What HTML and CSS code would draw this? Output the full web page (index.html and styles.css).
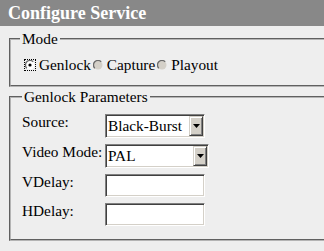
FILE: index.html
```html
<!DOCTYPE html>
<html>
<head>
<meta charset="utf-8">
<title>Configure Service</title>
<link rel="stylesheet" href="styles.css">
</head>
<body class="page">
<div class="header">Configure Service</div>
<fieldset class="group mode">
  <legend class="legend">Mode</legend>
  <div class="radios">
    <label class="opt"><span class="radio focus"><svg width="10" height="10" viewBox="0 0 10 10"><circle cx="5" cy="5" r="4.5" fill="#fff"/><path d="M8.2 1.8A4.5 4.5 0 0 0 1.8 8.2" fill="none" stroke="#6a6a6a" stroke-width="1.3"/><circle cx="5" cy="5" r="1.6" fill="#000"/></svg></span>Genlock</label>
    <label class="opt"><span class="radio"><svg width="10" height="10" viewBox="0 0 10 10"><circle cx="5" cy="5" r="4.5" fill="#d4d0c8"/><path d="M8.2 1.8A4.5 4.5 0 0 0 1.8 8.2" fill="none" stroke="#6a6a6a" stroke-width="1.3"/></svg></span>Capture</label>
    <label class="opt"><span class="radio"><svg width="10" height="10" viewBox="0 0 10 10"><circle cx="5" cy="5" r="4.5" fill="#d4d0c8"/><path d="M8.2 1.8A4.5 4.5 0 0 0 1.8 8.2" fill="none" stroke="#6a6a6a" stroke-width="1.3"/></svg></span>Playout</label>
  </div>
</fieldset>
<fieldset class="group params">
  <legend class="legend">Genlock Parameters</legend>
  <div class="form">
    <div class="lbl">Source:</div>
    <div class="select sel-source"><span class="val">Black-Burst</span><span class="btn"><svg width="7" height="4" viewBox="0 0 7 4"><polygon points="0,0 7,0 3.5,4" fill="#000"/></svg></span></div>
    <div class="lbl">Video Mode:</div>
    <div class="select sel-mode"><span class="val">PAL</span><span class="btn"><svg width="7" height="4" viewBox="0 0 7 4"><polygon points="0,0 7,0 3.5,4" fill="#000"/></svg></span></div>
    <div class="lbl">VDelay:</div>
    <div class="input"></div>
    <div class="lbl">HDelay:</div>
    <div class="input"></div>
  </div>
</fieldset>
</body>
</html>
```
FILE: styles.css
```css
html, body {
  margin: 0;
}
.page {
  background: #eeeeee;
  font-size: 16px;
  color: #000;
  overflow: hidden;
}
.page, .page .header, .page .legend, .page .opt, .page .lbl, .page .val {
  font-family: "Liberation Serif", "Times New Roman", serif;
}
.header {
  height: 26px;
  line-height: 26px;
  background: #888888;
  color: #fff;
  font-weight: bold;
  font-size: 18px;
  padding-left: 8px;
}
.group {
  margin: 0 0 0 9px;
  padding: 0;
  border: 2px groove #b4b4b4;
  border-right: none;
  min-width: 0;
}
.mode {
  margin-top: 4px;
}
.params {
  margin-top: 1px;
}
.legend {
  font-size: 15.3px;
  line-height: 18px;
  padding: 0 2px;
  margin-left: 9px;
}
.params .legend {
  margin-left: 11px;
}
.radios {
  display: flex;
  align-items: center;
  line-height: 18px;
  padding: 8px 0 11px 14px;
}
.opt {
  display: flex;
  align-items: center;
  gap: 4px;
  margin-right: 2px;
  font-size: 15.3px;
}
.radio {
  display: block;
  width: 10px;
  height: 10px;
}
.radio svg {
  display: block;
}
.focus {
  outline: 1px dotted #000;
}
.form {
  display: grid;
  grid-template-columns: 83px auto;
  grid-template-rows: 24px 24px 23px 23px;
  row-gap: 6px;
  justify-content: start;
  padding: 8px 0 13px 11px;
}
.lbl {
  font-size: 15.3px;
  line-height: 16px;
  white-space: nowrap;
}
.select, .input {
  box-sizing: border-box;
  background: #fff;
  border: 1px solid;
  border-color: #808080 #fff #fff #808080;
  box-shadow: inset 1px 1px 0 #404040, inset -1px -1px 0 #d4d0c8;
}
.select {
  display: flex;
  padding: 1px;
  height: 24px;
}
.sel-source {
  width: 100px;
}
.sel-mode {
  width: 104px;
}
.val {
  flex: 1;
  font-size: 15.3px;
  line-height: 20px;
  padding-left: 1px;
}
.btn {
  box-sizing: border-box;
  width: 14px;
  background: #d4d0c8;
  border: 1px solid;
  border-color: #d4d0c8 #404040 #404040 #d4d0c8;
  box-shadow: inset 1px 1px 0 #fff, inset -1px -1px 0 #808080;
  display: flex;
  align-items: center;
  justify-content: center;
}
.btn svg {
  display: block;
}
.input {
  width: 100px;
  height: 23px;
}
```
